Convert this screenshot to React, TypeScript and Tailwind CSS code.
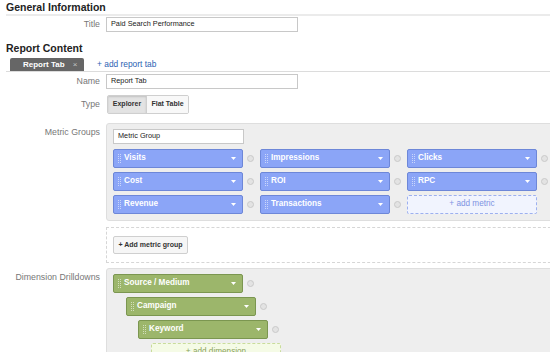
import clsx from "clsx";

const Grip = () => (
  <svg width="3" height="9" viewBox="0 0 3 9" className="shrink-0">
    {[0, 1, 2, 3, 4].map((i) => (
      <g key={i} fill="rgba(255,255,255,0.55)">
        <rect x="0" y={i * 2} width="1" height="1" />
        <rect x="2" y={i * 2} width="1" height="1" />
      </g>
    ))}
  </svg>
);

const Dot = () => (
  <span className="ml-[4px] inline-block h-[7px] w-[7px] shrink-0 rounded-full border border-[#c9c9c9] bg-[#e3e3e3]" />
);

const Chip = ({ label, green }: { label: string; green?: boolean }) => (
  <div className="flex items-center">
    <div
      className={clsx(
        "flex h-[19px] w-[130px] items-center rounded-[2px] border pl-[4px] pr-[6px]",
        green ? "border-[#7b9650] bg-[#9cb66b]" : "border-[#6d87d8] bg-[#8ba5f7]"
      )}
    >
      <Grip />
      <span className="ml-[3px] flex-1 text-[8.2px] font-bold leading-none text-white">
        {label}
      </span>
      <svg width="5" height="3" viewBox="0 0 5 3">
        <path d="M0 0h5L2.5 3z" fill="white" />
      </svg>
    </div>
    <Dot />
  </div>
);

const Label = ({ children, className }: { children: string; className?: string }) => (
  <div className={clsx("w-[100px] shrink-0 text-right text-[8.8px] leading-none text-[#777]", className)}>
    {children}
  </div>
);

const TextBox = ({ value, width }: { value: string; width: string }) => (
  <div
    className={clsx(
      "flex h-[15px] items-center border border-[#c8c8c8] bg-white px-[4px] text-[7.3px] text-[#222]",
      width
    )}
  >
    {value}
  </div>
);

export default function App() {
  const metrics = ["Visits", "Impressions", "Clicks", "Cost", "ROI", "RPC", "Revenue", "Transactions"];

  return (
    <div
      className="h-[352px] w-[550px] overflow-hidden bg-white"
      style={{ fontFamily: '"Liberation Sans", Arial, sans-serif' }}
    >
      <div className="ml-[6px] h-[16px] border-b-2 border-[#ebebeb] pt-[1px] text-[10.5px] font-bold leading-[12px] text-[#222]">
        General Information
      </div>

      <div className="mt-[1px] flex items-center gap-[6px]">
        <Label>Title</Label>
        <TextBox value="Paid Search Performance" width="w-[192px]" />
      </div>

      <div className="ml-[6px] mt-[10px] text-[10.5px] font-bold leading-[13px] text-[#222]">
        Report Content
      </div>

      <div className="ml-[6px] mt-[3px] flex h-[14px] items-end border-b border-[#dcdcdc]">
        <div className="ml-[4px] flex h-[13px] w-[74px] items-center rounded-t-[2px] bg-[#666] pl-[13px] text-[8px] font-bold text-white">
          Report Tab
          <span className="ml-[8px] font-normal text-[#c4c4c4]">×</span>
        </div>
        <div className="mb-[3px] ml-[13px] text-[8.4px] leading-none text-[#2c5fb3]">+ add report tab</div>
      </div>

      <div className="mt-[2px] flex items-center gap-[6px]">
        <Label>Name</Label>
        <TextBox value="Report Tab" width="w-[192px]" />
      </div>

      <div className="mt-[6px] flex items-center gap-[6px]">
        <Label>Type</Label>
        <div className="ml-[1px] flex h-[19px] overflow-hidden rounded-[2px] border border-[#cfcfcf] text-[7px] font-bold text-[#333]">
          <div className="flex w-[39px] items-center justify-center border-r border-[#cfcfcf] bg-[#e3e3e3] shadow-[inset_0_1px_2px_rgba(0,0,0,0.15)]">
            Explorer
          </div>
          <div className="flex w-[41px] items-center justify-center bg-[#f8f8f8]">Flat Table</div>
        </div>
      </div>

      <div className="mt-[9px] flex gap-[6px]">
        <Label className="pt-[5px]">Metric Groups</Label>
        <div className="w-[460px] shrink-0 rounded-tl-[3px] rounded-bl-[3px] border border-[#dedede] bg-[#eeeeee] pb-[6px] pl-[6px] pt-[5px]">
          <TextBox value="Metric Group" width="w-[131px]" />
          <div className="mt-[5px] grid w-[441px] grid-cols-3 gap-y-[4px]">
            {metrics.map((m) => (
              <Chip key={m} label={m} />
            ))}
            <div className="flex h-[19px] w-[130px] items-center justify-center rounded-[2px] border border-dashed border-[#9db0ef] bg-[#f1f4fe] text-[8.2px] text-[#7d93e2]">
              + add metric
            </div>
          </div>
        </div>
      </div>

      <div className="ml-[106px] mt-[6px] h-[36px] w-[460px] border border-dashed border-[#d6d6d6] pl-[6px] pt-[8px]">
        <div className="flex h-[18px] w-[75px] items-center justify-center rounded-[2px] border border-[#cfcfcf] bg-[#f6f6f6] text-[7px] font-bold text-[#333]">
          + Add metric group
        </div>
      </div>

      <div className="mt-[5px] flex gap-[6px]">
        <Label className="pt-[5px]">Dimension Drilldowns</Label>
        <div className="h-[100px] w-[460px] shrink-0 rounded-tl-[3px] border border-[#dedede] bg-[#eeeeee] pl-[6px] pt-[5px]">
          <div className="flex flex-col gap-[4px]">
            <Chip label="Source / Medium" green />
            <div className="ml-[13px]">
              <Chip label="Campaign" green />
            </div>
            <div className="ml-[25px]">
              <Chip label="Keyword" green />
            </div>
            <div className="ml-[38px] flex h-[19px] w-[130px] items-center justify-center rounded-[2px] border border-dashed border-[#c9dc9c] bg-[#f5fbe6] text-[8.2px] text-[#8aa25d]">
              + add dimension
            </div>
          </div>
        </div>
      </div>
    </div>
  );
}
